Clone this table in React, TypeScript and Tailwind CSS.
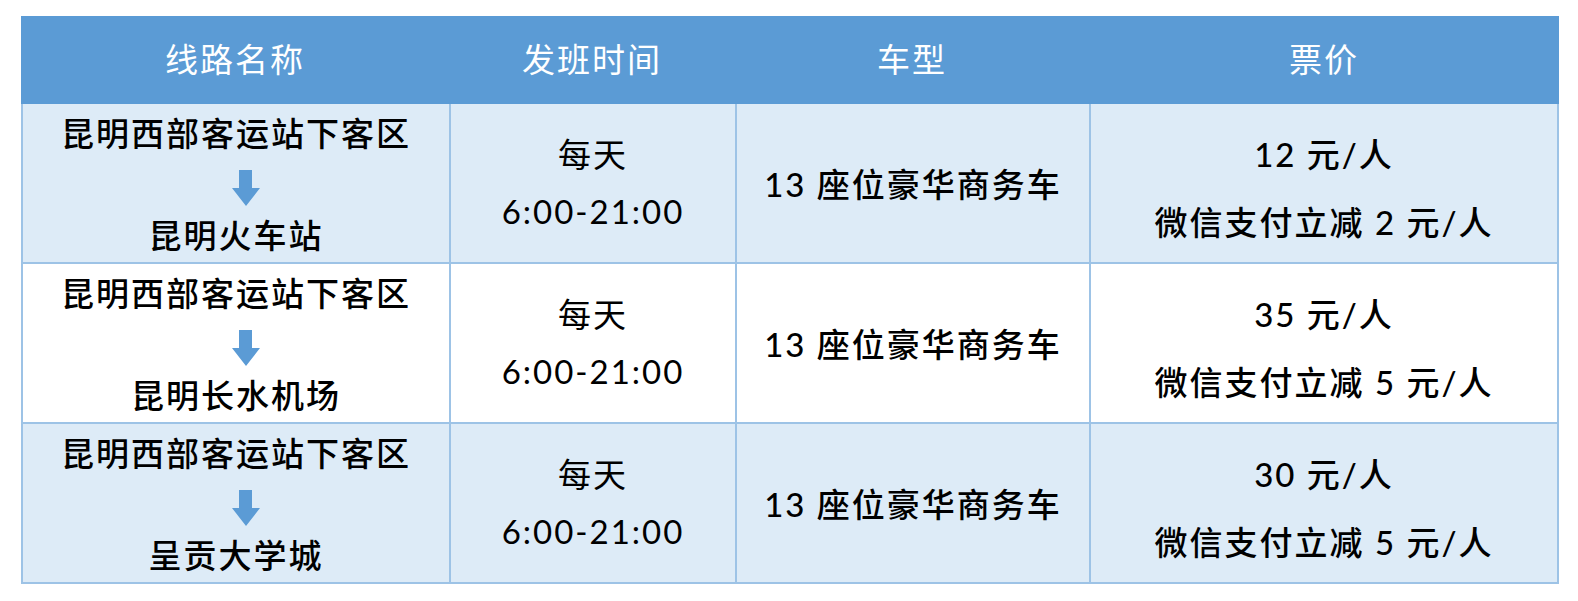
import * as React from "react";

interface Route {
  from: string;
  to: string;
  price: string;
  discount: string;
  white?: boolean;
}

const routes: Route[] = [
  { from: "昆明西部客运站下客区", to: "昆明火车站", price: "12 元/人", discount: "微信支付立减 2 元/人" },
  { from: "昆明西部客运站下客区", to: "昆明长水机场", price: "35 元/人", discount: "微信支付立减 5 元/人", white: true },
  { from: "昆明西部客运站下客区", to: "呈贡大学城", price: "30 元/人", discount: "微信支付立减 5 元/人" },
];

function DownArrow() {
  return (
    <svg width="28" height="36" viewBox="0 0 28 36" className="ml-[20px] mt-[6px]">
      <path d="M7 0 H20 V18 H28 L14 36 L0 18 H7 Z" fill="#5b9bd5" />
    </svg>
  );
}

export default function App() {
  return (
    <div className="min-h-screen bg-white pt-[16px] pl-[21px] font-[Lato,'Noto_Sans_CJK_SC',sans-serif] text-[33px] tracking-[2px]">
      <div className="grid w-[1538px] grid-cols-[428px_286px_354px_470px]">
        {/* Header */}
        {["线路名称", "发班时间", "车型", "票价"].map((h) => (
          <div key={h} className="flex h-[88px] items-center justify-center bg-[#5b9bd5] pb-[1px] text-white">
            {h}
          </div>
        ))}

        {routes.map((r, i) => {
          const bg = r.white ? "bg-white" : "bg-[#ddebf7]";
          return (
            <React.Fragment key={i}>
              <div className={`flex h-[160px] flex-col items-center border-b-2 border-l-2 border-[#9dc3e6] pt-[10px] font-medium text-black ${bg}`}>
                <div className="flex h-[40px] items-center">{r.from}</div>
                <div className="flex h-[62px] items-center">
                  <DownArrow />
                </div>
                <div className="flex h-[40px] items-center">{r.to}</div>
              </div>
              <div className={`flex h-[160px] flex-col items-center justify-center border-b-2 border-l-2 border-[#9dc3e6] text-black ${bg}`}>
                <div className="leading-[57px]">每天</div>
                <div className="leading-[57px]">6:00-21:00</div>
              </div>
              <div className={`flex h-[160px] items-center justify-center border-b-2 border-l-2 border-[#9dc3e6] pt-[3px] font-medium text-black ${bg}`}>
                13 座位豪华商务车
              </div>
              <div className={`flex h-[160px] flex-col items-center justify-center border-b-2 border-l-2 border-r-2 border-[#9dc3e6] pt-[10px] font-medium text-black ${bg}`}>
                <div className="leading-[68px]">{r.price}</div>
                <div className="leading-[68px]">{r.discount}</div>
              </div>
            </React.Fragment>
          );
        })}
      </div>
    </div>
  );
}
